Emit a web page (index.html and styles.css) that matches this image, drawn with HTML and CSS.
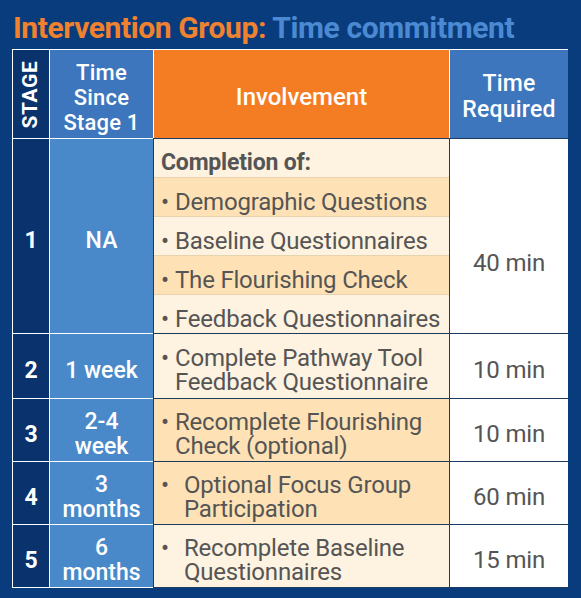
FILE: index.html
```html
<!DOCTYPE html>
<html lang="en">
<head>
<meta charset="utf-8">
<title>Intervention Group: Time commitment</title>
<link rel="stylesheet" href="styles.css">
</head>
<body>
<div class="page">
  <h1 class="title"><span class="t-orange">Intervention Group:</span> <span class="t-blue">Time commitment</span></h1>
  <div class="table">
    <div class="c h stage-h"><span class="vert">STAGE</span></div>
    <div class="c h since-h">Time<br>Since<br>Stage 1</div>
    <div class="c h inv-h">Involvement</div>
    <div class="c h req-h">Time<br>Required</div>

    <div class="c stage">1</div>
    <div class="c since">NA</div>
    <div class="c inv multi">
      <div class="sub cream"><b class="lead">Completion of:</b></div>
      <div class="sub peach"><div class="item"><span class="bul">•</span><span>Demographic Questions</span></div></div>
      <div class="sub cream"><div class="item"><span class="bul">•</span><span>Baseline Questionnaires</span></div></div>
      <div class="sub peach"><div class="item"><span class="bul">•</span><span>The Flourishing Check</span></div></div>
      <div class="sub cream"><div class="item"><span class="bul">•</span><span>Feedback Questionnaires</span></div></div>
    </div>
    <div class="c req first">40 min</div>

    <div class="c stage">2</div>
    <div class="c since">1 week</div>
    <div class="c inv cream"><div class="item"><span class="bul">•</span><span>Complete Pathway Tool Feedback Questionnaire</span></div></div>
    <div class="c req">10 min</div>

    <div class="c stage">3</div>
    <div class="c since">2-4<br>week</div>
    <div class="c inv peach"><div class="item"><span class="bul">•</span><span>Recomplete Flourishing Check (optional)</span></div></div>
    <div class="c req">10 min</div>

    <div class="c stage">4</div>
    <div class="c since">3<br>months</div>
    <div class="c inv peach"><div class="item"><span class="bul wide">•</span><span>Optional Focus Group Participation</span></div></div>
    <div class="c req">60 min</div>

    <div class="c stage last">5</div>
    <div class="c since last">6<br>months</div>
    <div class="c inv cream last"><div class="item"><span class="bul wide">•</span><span>Recomplete Baseline Questionnaires</span></div></div>
    <div class="c req last">15 min</div>
  </div>
</div>
</body>
</html>
```
FILE: styles.css
```css
html, body {
  margin: 0;
  padding: 0;
}
body {
  background: #093c7c;
  font-family: Roboto, "Liberation Sans", sans-serif;
  width: 581px;
  height: 598px;
  overflow: hidden;
}
.page {
  padding: 6px 13px 0 12px;
}
.title {
  margin: 0 0 0 1px;
  height: 43px;
  font-size: 30px;
  line-height: 43px;
  font-weight: 700;
  letter-spacing: -0.4px;
  white-space: nowrap;
}
.t-orange { color: #f0822f; }
.t-blue { color: #4b8ad2; }

.table {
  display: grid;
  grid-template-columns: 37px 104px 296px 119px;
  grid-template-rows: 89px 195px 65px 63px 63px 64px;
  width: 556px;
}
.c {
  box-sizing: border-box;
  display: flex;
  align-items: center;
  justify-content: center;
  text-align: center;
  border-top: 1px solid #ffffff;
  border-left: 1px solid #ffffff;
  padding-top: 8px;
}
.h {
  color: #ffffff;
  font-size: 24px;
  font-weight: 500;
  line-height: 25px;
  padding-top: 6px;
}
.stage-h { background: #0a336d; padding-top: 0; }
.since-h {
  background: #3e76bd;
  font-size: 22px;
  line-height: 25px;
  letter-spacing: 0.2px;
}
.inv-h { background: #f47c22; }
.req-h {
  background: #3e76bd;
  font-size: 23px;
  line-height: 26px;
  letter-spacing: 0.2px;
}
.vert {
  display: inline-block;
  transform: rotate(-90deg);
  font-weight: 700;
  font-size: 21px;
  letter-spacing: 0.6px;
  white-space: nowrap;
}
.stage {
  background: #0a336d;
  color: #ffffff;
  font-weight: 700;
  font-size: 23px;
}
.since {
  background: #4a89c9;
  color: #ffffff;
  font-weight: 500;
  font-size: 23px;
  line-height: 25px;
  letter-spacing: 0;
}
.inv {
  border-left-color: #1d3b5e;
  border-top-color: #1d3b5e;
  justify-content: flex-start;
  text-align: left;
  color: #555555;
  font-size: 24px;
  line-height: 24px;
  padding-left: 7px;
  letter-spacing: -0.2px;
}
.inv.multi {
  flex-direction: column;
  align-items: stretch;
  padding: 0;
}
.item {
  display: flex;
  align-items: flex-start;
}
.sub {
  flex: 1;
  display: flex;
  align-items: center;
  padding-left: 7px;
  padding-top: 9px;
  border-top: 1px solid #e8d3b0;
}
.sub:first-child { border-top: none; }
.cream { background: #fef2e0; }
.peach { background: #fee2b5; }
.bul {
  flex: none;
  width: 14px;
}
.bul.wide { width: 23px; }
.lead {
  font-weight: 700;
  font-size: 23px;
  color: #555555;
  letter-spacing: -0.2px;
}
.req {
  background: #ffffff;
  border-left-color: #1d3b5e;
  border-top-color: #1d3b5e;
  color: #555555;
  font-size: 24px;
  letter-spacing: -0.2px;
}
.req.first { padding-top: 53px; }
.last { border-bottom: 1px solid #ffffff; }
.inv.last, .req.last { border-bottom-color: #1d3b5e; }
```
